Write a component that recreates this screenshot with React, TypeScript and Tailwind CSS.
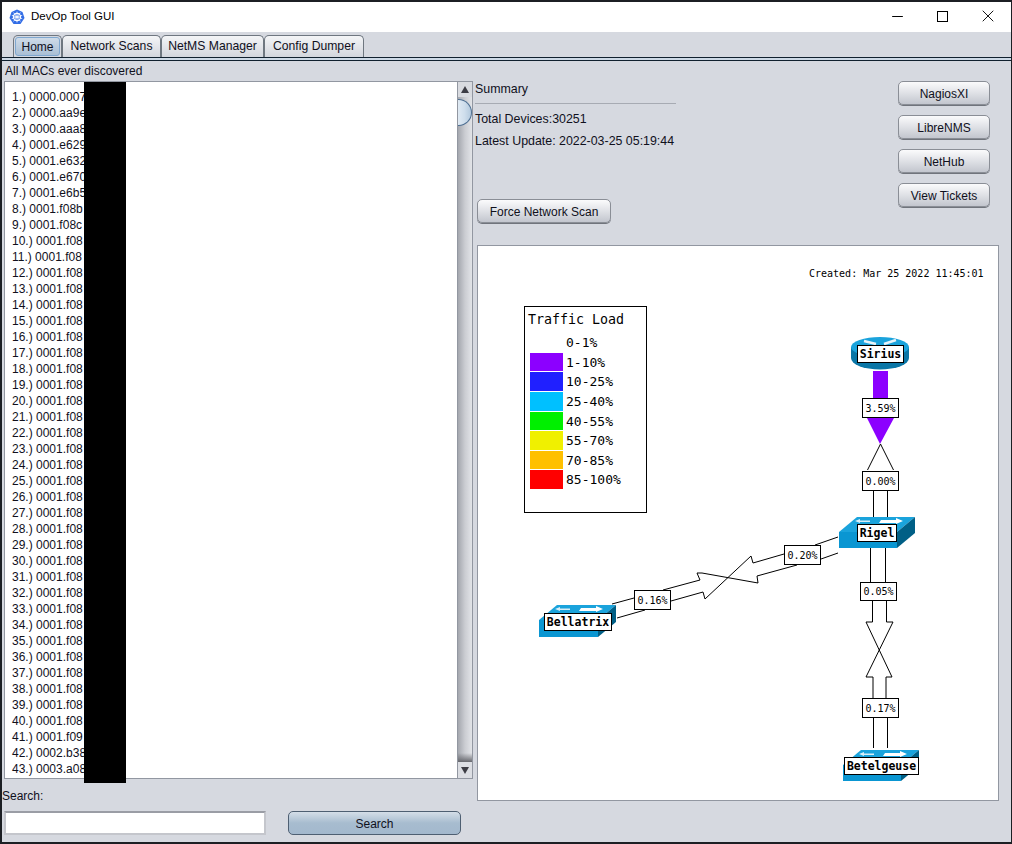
import { Minus, X } from 'lucide-react';

const prefixes: Record<number, string> = {
  1: '0000.0007',
  2: '0000.aa9e',
  3: '0000.aaa8',
  4: '0001.e629',
  5: '0001.e632',
  6: '0001.e670',
  7: '0001.e6b5',
  8: '0001.f08b',
  9: '0001.f08c',
  41: '0001.f09',
  42: '0002.b38',
  43: '0003.a08',
};

const macRows = Array.from({ length: 43 }, (_, i) => {
  const n = i + 1;
  return `${n}.) ${prefixes[n] ?? '0001.f08'}`;
});

const legend = [
  { label: '1-10%', color: '#8c00ff', y: 353, h: 18 },
  { label: '10-25%', color: '#2020ff', y: 372, h: 19 },
  { label: '25-40%', color: '#00c0ff', y: 392, h: 19 },
  { label: '40-55%', color: '#00f000', y: 412, h: 18 },
  { label: '55-70%', color: '#f0f000', y: 431, h: 19 },
  { label: '70-85%', color: '#ffc000', y: 451, h: 18 },
  { label: '85-100%', color: '#ff0000', y: 470, h: 19 },
];

const mono = '"DejaVu Sans Mono", "Liberation Mono", monospace';

const Btn = ({ label, className }: { label: string; className: string }) => (
  <button className={`flex items-center justify-center rounded-[5px] border border-[#8a8e96] bg-gradient-to-b from-[#fbfbfc] via-[#dfe1e6] to-[#c3c6ce] pt-[1px] text-[12px] text-[#10101c] shadow-[0_1px_0_#70747c] ${className}`}>
    {label}
  </button>
);

const PctLabel = ({ x, y, w, h, text }: { x: number; y: number; w: number; h: number; text: string }) => (
  <g>
    <rect x={x + 0.5} y={y + 0.5} width={w} height={h} fill="#fff" stroke="#000" />
    <text x={x + w / 2 + 0.5} y={y + h / 2 + 4} textAnchor="middle" fontSize="10" fontFamily={mono} fill="#000">
      {text}
    </text>
  </g>
);

const NodeLabel = ({ x, y, w, h, text }: { x: number; y: number; w: number; h: number; text: string }) => (
  <g>
    <rect x={x + 0.5} y={y + 0.5} width={w} height={h} fill="#fff" stroke="#000" />
    <text x={x + w / 2 + 0.5} y={y + h / 2 + 4.5} textAnchor="middle" fontSize="11.5" fontWeight="700" fontFamily={mono} fill="#000">
      {text}
    </text>
  </g>
);

const SwitchIcon = ({ left, top, frontW, frontH, depthX, depthY }: { left: number; top: number; frontW: number; frontH: number; depthX: number; depthY: number }) => {
  const fy = top + depthY;
  const ay = top + 4;
  const l = left + 16;
  const r = left + 40;
  return (
    <g>
      <polygon points={`${left},${fy} ${left + depthX},${top} ${left + depthX + frontW},${top} ${left + frontW},${fy}`} fill="#1aa3dc" />
      <polygon points={`${left},${fy} ${left + frontW},${fy} ${left + frontW},${fy + frontH} ${left},${fy + frontH}`} fill="#0a96d2" />
      <polygon points={`${left + frontW},${fy} ${left + frontW + depthX},${top} ${left + frontW + depthX},${top + frontH} ${left + frontW},${fy + frontH}`} fill="#005f86" />
      <polygon points={`${l},${ay} ${l + 5},${ay - 2} ${l + 5},${ay - 0.5} ${l + 15},${ay - 0.5} ${l + 15},${ay + 1} ${l + 5},${ay + 1} ${l + 5},${ay + 2}`} fill="#d8eef8" />
      <polygon points={`${r + 24},${ay} ${r + 17},${ay - 3} ${r + 17},${ay - 1} ${r + 2},${ay - 1} ${r},${ay + 2} ${r + 17},${ay + 2} ${r + 17},${ay + 3}`} fill="#fff" />
    </g>
  );
};

const NetworkMap = () => (
  <svg width="520" height="554" viewBox="478 246 520 554" className="block">
    <text x="809" y="277" fontSize="10" fontFamily={mono} fill="#000">Created: Mar 25 2022 11:45:01</text>

    {/* legend */}
    <rect x="524.5" y="306.5" width="122" height="206" fill="#fff" stroke="#000" />
    <text x="528" y="324" fontSize="13.3" fontFamily={mono} fill="#000">Traffic Load</text>
    <text x="566" y="347" fontSize="13" fontFamily={mono} fill="#000">0-1%</text>
    {legend.map((row) => (
      <g key={row.label}>
        <rect x="530" y={row.y} width="33" height={row.h} fill={row.color} />
        <text x="566" y={row.y + 14} fontSize="13" fontFamily={mono} fill="#000">{row.label}</text>
      </g>
    ))}

    {/* links */}
    <g fill="none" stroke="#000" strokeWidth="1">
      <polygon points="873,371 888,371 888,418 894,418 880,444 867,418 873,418" fill="#8c00ff" stroke="none" />
      <path d="M880.5 444L867.5 470M880.5 444L893.5 470" />
      <path d="M873.5 490V517M887.5 490V517" />

      <path d="M870.5 548V582M885.5 548V582" />
      <path d="M872.5 600V622H866L892 677H886V698M886.5 600V622H893L866 677H873V698" />
      <path d="M873.5 717V748M887.5 717V748" />

      <path d="M612 604L634 598M617 618L645 610" />
      <path d="M663 590L700 580L697 573L702 573L758 583L757 576L797 565" />
      <path d="M671 601L703 592L705 599L751 556L753 563L784 554" />
      <path d="M815 545L838 537M821 559L838 553" />
    </g>

    {/* nodes */}
    <g>
      <ellipse cx="880" cy="358" rx="29" ry="11.5" fill="#0a76a6" />
      <rect x="851" y="347" width="58" height="11" fill="#0a76a6" />
      <ellipse cx="880" cy="347" rx="29" ry="10" fill="#1aa3dc" />
      <path d="M864 341l12 3M884 344l12-4" stroke="#e8f4fa" strokeWidth="2.5" />
    </g>
    <NodeLabel x={857} y={345} w={46} h={17} text="Sirius" />

    <SwitchIcon left={839} top={517} frontW={58} frontH={16} depthX={18} depthY={15} />
    <NodeLabel x={857} y={524} w={39} h={17} text="Rigel" />

    <SwitchIcon left={539} top={605} frontW={59} frontH={17} depthX={18} depthY={15} />
    <NodeLabel x={544} y={613} w={67} h={17} text="Bellatrix" />

    <SwitchIcon left={843} top={750} frontW={58} frontH={16} depthX={18} depthY={15} />
    <NodeLabel x={844} y={757} w={74} h={17} text="Betelgeuse" />

    <PctLabel x={862} y={398} w={36} h={19} text="3.59%" />
    <PctLabel x={862} y={471} w={36} h={19} text="0.00%" />
    <PctLabel x={860} y={582} w={36} h={18} text="0.05%" />
    <PctLabel x={862} y={698} w={36} h={19} text="0.17%" />
    <PctLabel x={634} y={590} w={36} h={19} text="0.16%" />
    <PctLabel x={784} y={545} w={36} h={19} text="0.20%" />
  </svg>
);

const AppIcon = () => (
  <svg width="16" height="16" viewBox="0 0 16 16">
    <polygon points="8,0.5 13.5,3 15.5,9 11.5,15 4.5,15 0.5,9 2.5,3" fill="#326de6" />
    <circle cx="8" cy="8" r="3.6" fill="none" stroke="#fff" strokeWidth="1.1" />
    <path d="M8 2.6V13.4M2.8 6.4L13.2 9.6M13.2 6.4L2.8 9.6M4.6 12.4L11.4 3.6M11.4 12.4L4.6 3.6" stroke="#fff" strokeWidth="0.8" />
  </svg>
);

const App = () => {
  const tabs = [
    { label: 'Network Scans', w: 'w-[99px]' },
    { label: 'NetMS Manager', w: 'w-[103px]' },
    { label: 'Config Dumper', w: 'w-[100px]' },
  ];

  return (
    <div
      className="flex h-[844px] w-[1012px] flex-col overflow-hidden border-y-2 border-r border-l-2 border-[#1c1f24] bg-[#d6d9e0] text-[12px] text-[#10101c]"
      style={{ fontFamily: '"Liberation Sans", Arial, sans-serif' }}
    >
      {/* title bar */}
      <div className="flex h-[30px] items-center bg-white text-black">
        <div className="ml-[7px] flex items-center gap-[6px]">
          <AppIcon />
          <span className="text-[11.5px]">DevOp Tool GUI</span>
        </div>
        <div className="ml-auto mb-[2px] flex items-center">
          <Minus size={17} strokeWidth={1.4} className="mr-[31px]" />
          <div className="mr-[30px] h-[11px] w-[11px] border border-black" />
          <X size={20} strokeWidth={1.1} className="mr-[13px]" />
        </div>
      </div>

      {/* tabs */}
      <div className="flex h-[25px] items-end pl-[11px]">
        <div className="flex h-[22px] w-[49px] items-center justify-center rounded-t-[5px] border border-b-0 border-[#6f7780] bg-[#d6d9e0] p-[1px]">
          <div className="flex h-full w-full items-center justify-center rounded-[3px] border border-[#7fa7cf] bg-gradient-to-b from-[#cfdbe8] to-[#a9bfd5]">
            Home
          </div>
        </div>
        {tabs.map((tab) => (
          <div
            key={tab.label}
            className={`flex h-[22px] items-center justify-center rounded-t-[5px] border border-b-0 border-[#6f7780] bg-gradient-to-b from-[#f4f5f7] to-[#d3d6dd] text-[12.2px] ${tab.w}`}
          >
            {tab.label}
          </div>
        ))}
      </div>
      <div className="h-[4px] border-y border-[#10202e] bg-[#cdd9e6]" />

      {/* body */}
      <div className="flex flex-1">
        {/* left column */}
        <div className="flex w-[473px] flex-col pl-[3px]">
          <div className="flex h-[20px] items-center">All MACs ever discovered</div>
          <div className="relative ml-[-1px] flex h-[698px] w-[469px] border border-[#9297a1] bg-white">
            <div className="flex-1 overflow-hidden pl-[7px] pt-[7px]">
              {macRows.map((row) => (
                <div key={row} className="h-[16px] whitespace-nowrap leading-[16px]">{row}</div>
              ))}
            </div>
            {/* scrollbar */}
            <div className="flex w-[15px] flex-col border-l border-[#9297a1] bg-gradient-to-r from-[#a4a7ae] via-[#cbcdd2] to-[#e2e4e8]">
              <div className="flex h-[15px] items-center justify-center bg-[#d9dbe0]">
                <div className="h-0 w-0 border-x-[4px] border-b-[7px] border-x-transparent border-b-[#3c3c44]" />
              </div>
              <div className="mt-[2px] h-[27px] w-[14px] rounded-r-full border border-l-0 border-[#4e6f92] bg-gradient-to-r from-[#e0eaf3] via-[#cfdeec] to-[#b4cade]" />
              <div className="mt-auto h-[9px] bg-gradient-to-b from-transparent to-[#66676d]" />
              <div className="flex h-[16px] items-center justify-center bg-[#dcdee3]">
                <div className="h-0 w-0 border-x-[4px] border-t-[7px] border-x-transparent border-t-[#3c3c44]" />
              </div>
            </div>
            {/* redaction bar */}
            <div className="absolute bottom-[-5px] left-[79px] top-0 w-[42px] bg-black" />
          </div>
          <div className="mt-[10px] ml-[-3px] h-[15px] leading-[15px]">Search:</div>
          <div className="mt-[7px] flex">
            <input className="ml-[-1px] h-[24px] w-[262px] border-2 border-[#c4c6cc] border-t-[#9a9da5] bg-white outline-none" />
            <button className="ml-[22px] flex h-[24px] w-[173px] items-center justify-center rounded-[5px] border border-[#4e5f72] bg-gradient-to-b from-[#d4dee8] via-[#a7bccf] to-[#a3b8cd] pt-[1px] text-[12px] text-[#10101c]">
              Search
            </button>
          </div>
        </div>

        {/* right column */}
        <div className="flex flex-1 flex-col">
          <div className="flex h-[184px] justify-between">
            <div className="flex flex-col text-[12.4px]">
              <div className="flex h-[43px] w-[201px] items-end border-b border-[#a7abb3] pb-[4px]">Summary</div>
              <div className="mt-[8px] h-[15px] leading-[15px]">Total Devices:30251</div>
              <div className="mt-[7px] h-[15px] leading-[15px]">Latest Update: 2022-03-25 05:19:44</div>
              <Btn label="Force Network Scan" className="mt-[50px] ml-[2px] h-[24px] w-[134px]" />
            </div>
            <div className="mr-[21px] flex flex-col gap-[10px] pt-[20px]">
              <Btn label="NagiosXI" className="h-[24px] w-[92px]" />
              <Btn label="LibreNMS" className="h-[24px] w-[92px]" />
              <Btn label="NetHub" className="h-[24px] w-[92px]" />
              <Btn label="View Tickets" className="h-[24px] w-[92px]" />
            </div>
          </div>
          <div className="ml-[2px] h-[556px] w-[522px] border border-[#9297a1] bg-white">
            <NetworkMap />
          </div>
        </div>
      </div>
    </div>
  );
};

export default App;
